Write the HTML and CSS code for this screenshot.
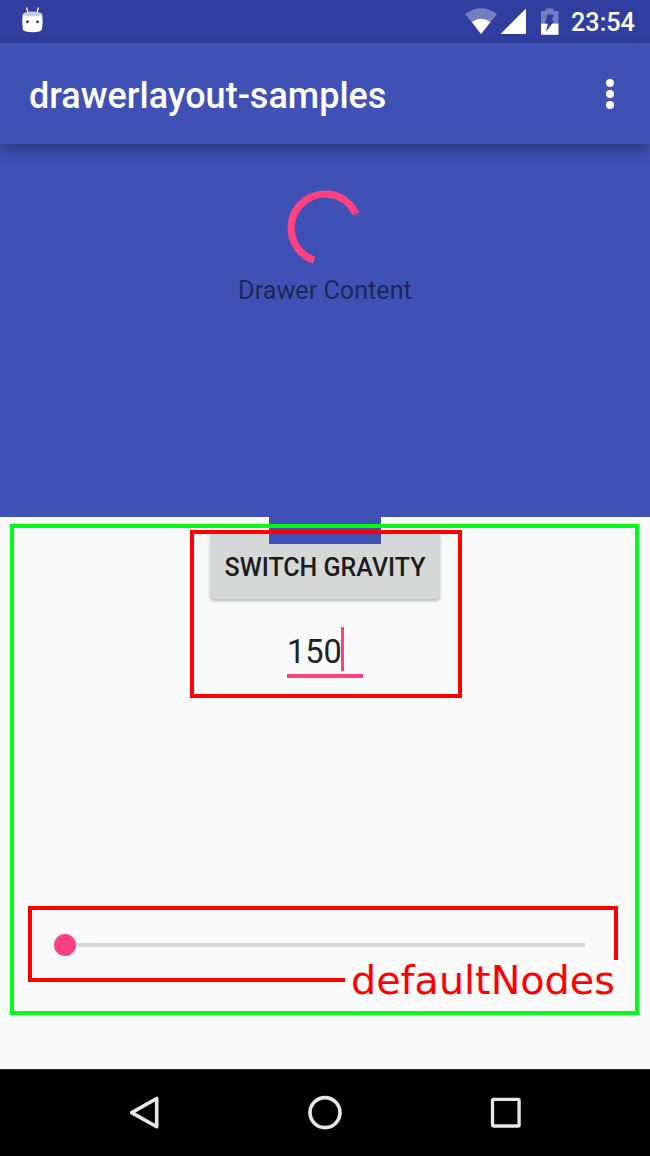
FILE: index.html
```html
<!DOCTYPE html>
<html lang="en">
<head>
<meta charset="utf-8">
<title>drawerlayout-samples</title>
<link rel="stylesheet" href="styles.css">
</head>
<body>
<div class="phone">
  <header class="status-bar">
    <svg class="debug-icon" width="24" height="28" viewBox="0 0 24 28">
      <path d="M6.500 2.500l1.500 5M18.500 2.500L17 7.500" stroke="#fff" stroke-width="1.300" fill="none"/>
      <path d="M2.800 9Q1.500 17 2.900 24.500Q4 27 12.500 27.200Q21 27 21.900 24.500Q23.400 17 22.100 9Z" fill="#fff"/>
      <ellipse cx="12.500" cy="9" rx="9.300" ry="2.600" fill="#c5c9e6"/>
      <circle cx="7.400" cy="16.700" r="1.500" fill="#303f9f"/>
      <circle cx="17.600" cy="16.700" r="1.500" fill="#303f9f"/>
    </svg>
    <div class="status-right">
      <svg class="signal-icons" width="96" height="30" viewBox="0 0 96 30">
        <path d="M0 9Q16 -2.500 32 9L16 29Z" fill="#747dbf"/>
        <path d="M7 17Q16 10.500 25.500 17L16 29Z" fill="#fff"/>
        <path d="M61 3.500V29H35.500Z" fill="#fff"/>
        <path d="M80.500 3.500H88.500V6H93.500V18.500H76V6H80.500Z" fill="#747dbf"/>
        <path d="M76 18.500H93.500V29.800H76Z" fill="#fff"/>
        <path d="M82.500 9.500H89L86.500 15.500H89.700L80.800 26.800L83 18.500H80Z" fill="#303f9f"/>
      </svg>
      <span class="clock">23:54</span>
    </div>
  </header>
  <div class="app-bar">
    <h1 class="title">drawerlayout-samples</h1>
    <div class="overflow"><i></i><i></i><i></i></div>
  </div>
  <section class="drawer">
    <svg class="spinner" width="76" height="76" viewBox="0 0 76 76">
      <path d="M69 23.800A34 34 0 1 0 27.100 70.200" fill="none" stroke="#ff4081" stroke-width="7.200"/>
    </svg>
    <p class="drawer-label">Drawer Content</p>
  </section>
  <main class="content">
    <div class="handle"></div>
    <button class="switch">SWITCH GRAVITY</button>
    <div class="field"><span class="value">150</span><span class="caret"></span></div>
    <div class="slider"><span class="thumb"></span><span class="track"></span></div>
    <div class="outline outline-all"></div>
    <div class="outline outline-top"></div>
    <div class="outline outline-slider"></div>
    <div class="note">defaultNodes</div>
  </main>
  <nav class="nav-bar">
    <svg width="34" height="38" viewBox="0 0 34 38"><path d="M29.700 4.500V32.700L4.700 18.600Z" fill="none" stroke="#e8e8e8" stroke-width="3.600" stroke-linejoin="round"/></svg>
    <svg width="34" height="38" viewBox="0 0 34 38"><circle cx="17" cy="18.600" r="15" fill="none" stroke="#e8e8e8" stroke-width="3.600"/></svg>
    <svg width="34" height="38" viewBox="0 0 34 38"><rect x="3.500" y="5.400" width="26.600" height="26.600" rx="1" fill="none" stroke="#e8e8e8" stroke-width="3.300"/></svg>
  </nav>
</div>
</body>
</html>
```
FILE: styles.css
```css
* { box-sizing: border-box; }
body { margin: 0; font-family: Roboto, "Noto Sans", sans-serif; }
.phone { width: 650px; height: 1156px; display: flex; flex-direction: column; background: #fafafa; overflow: hidden; }
.status-bar { height: 43px; flex: none; display: flex; justify-content: space-between; align-items: flex-start; background: #303f9f; padding: 5px 15px 0 20px; }
.status-right { display: flex; }
.clock { width: 64px; margin-left: 10px; padding-top: 2px; font-size: 25.2px; line-height: 31px; font-weight: 500; color: #fff; white-space: nowrap; }
.app-bar { height: 101px; flex: none; display: flex; align-items: center; justify-content: space-between; background: #3f51b5; padding: 5px 36px 0 29px; z-index: 1; box-shadow: 0 7px 14px -1px rgba(0, 0, 0, .32); }
.title { margin: 0; font-size: 36px; line-height: 42px; font-weight: 500; color: #fff; white-space: nowrap; }
.overflow { display: flex; flex-direction: column; gap: 3px; margin-bottom: 5px; }
.overflow i { width: 8px; height: 8px; border-radius: 50%; background: #fff; }
.drawer { height: 373px; flex: none; display: flex; flex-direction: column; align-items: center; background: #3f51b5; padding-top: 46px; }
.spinner { display: block; }
.drawer-label { margin: 9px 0 0; font-size: 25.2px; line-height: 32px; color: #1e2758; white-space: nowrap; }
.content { position: relative; height: 552px; flex: none; display: flex; flex-direction: column; align-items: center; }
.handle { width: 112px; height: 27px; background: #3f51b5; z-index: 1; }
.switch { width: 230px; height: 67px; margin-top: -12px; padding: 4px 0 0; border: 0; border-radius: 4px; background: #d6d7d7; color: #1c1c1c; font: 500 25px/63px Roboto, sans-serif; white-space: nowrap; box-shadow: 0 2px 3px rgba(0, 0, 0, .25); }
.field { width: 76px; height: 52px; margin-top: 27px; display: flex; border-bottom: 4px solid #ff4081; }
.value { width: 54px; padding-top: 7px; font-size: 32.5px; line-height: 38px; color: #202020; }
.caret { width: 3px; height: 44px; margin-top: 1px; background: #ff4081; }
.slider { width: 531px; height: 22px; margin: 256px 0 0 54px; display: flex; align-items: center; align-self: flex-start; }
.thumb { width: 22px; height: 22px; border-radius: 50%; background: #ff4081; }
.track { flex: 1; height: 4px; background: #d7d7d7; }
.outline { position: absolute; border: 4px solid #f00; }
.outline-all { left: 10px; top: 7px; width: 629px; height: 491px; border-color: #00ff12; z-index: 2; }
.outline-top { left: 190px; top: 13px; width: 272px; height: 168px; z-index: 2; }
.outline-slider { left: 28px; top: 389px; width: 590px; height: 76px; }
.note { position: absolute; left: 345px; top: 443px; width: 281px; height: 44px; padding-left: 6px; background: #fafafa; color: #f00; font: 39.7px/40px "DejaVu Sans", sans-serif; white-space: nowrap; z-index: 1; }
.nav-bar { height: 87px; flex: none; display: flex; align-items: center; justify-content: center; gap: 147px; background: #000; border-top: 1px solid #222; }
```
